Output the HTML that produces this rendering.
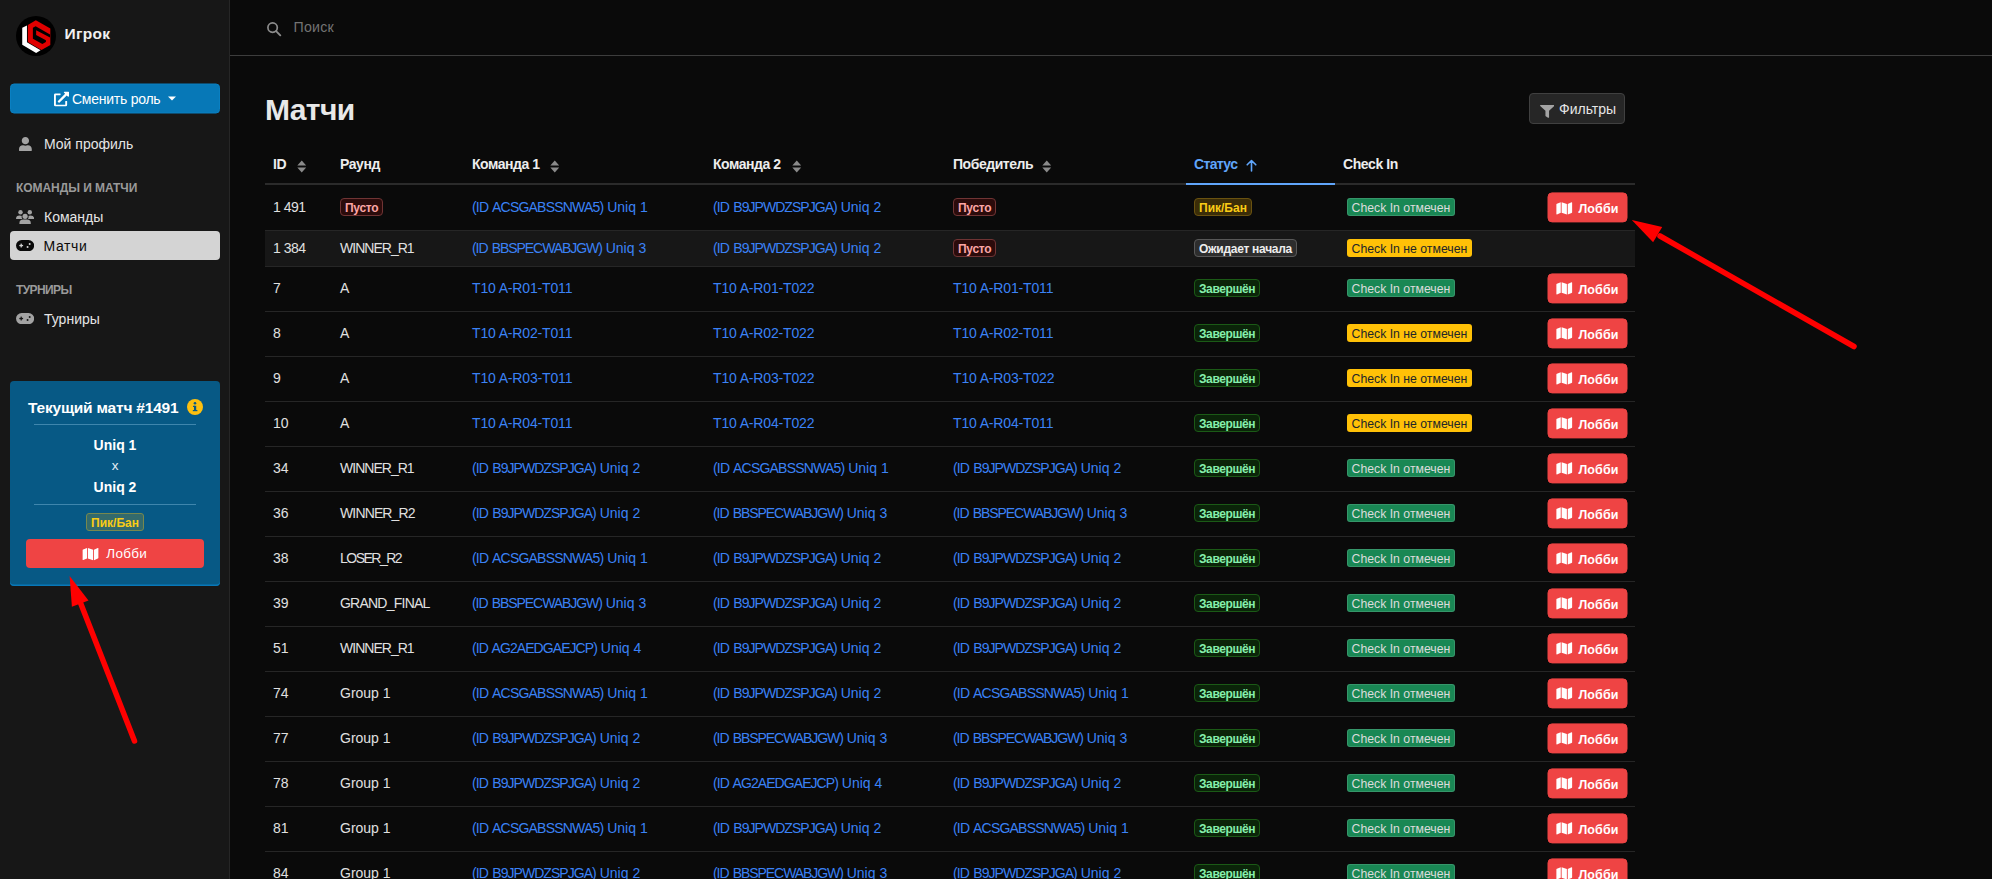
<!DOCTYPE html>
<html lang="ru"><head><meta charset="utf-8"><title>Матчи</title>
<style>
*{box-sizing:border-box;margin:0;padding:0}
html,body{width:1992px;height:879px;overflow:hidden;background:#0a0a0a;
  font-family:"Liberation Sans",sans-serif;color:#e5e5e5;}
body{position:relative}
a{color:inherit;text-decoration:none}
i{font-style:normal}
.abs{position:absolute}
svg{display:block}

/* ---------- sidebar ---------- */
#side{position:absolute;left:0;top:0;width:230px;height:879px;background:#171717;border-right:1px solid #262626}
#logo{position:absolute;left:15.900px;top:15.900px;width:40px;height:40px}
#brand{position:absolute;left:64.500px;top:24px;font-size:15.500px;font-weight:700;color:#f0f0f0;line-height:20px;white-space:nowrap;letter-spacing:0.3px}
#role{position:absolute;left:10px;top:83px;width:210px;height:30px;border-radius:4px;background:#0778b7;border:1px solid #0a80c2;transform:translateY(0.5px);
  color:#fff;font-size:14px;line-height:28px;white-space:nowrap}
.nav{position:absolute;left:10px;width:210px;height:29px;border-radius:4px;color:#e5e5e5;font-size:14px;line-height:29px;white-space:nowrap}
.nav .t{position:absolute;left:34px;top:1px}
.nav svg{position:absolute;left:6px;top:7.5px}
.nav.act{background:#d4d4d4;color:#0a0a0a}
.sec{position:absolute;left:16px;font-size:12px;font-weight:700;color:#9a9a9a;line-height:14px;white-space:nowrap;letter-spacing:-0.2px}

#card{position:absolute;left:10px;top:381px;width:210px;height:205px;background:#075985;border-radius:4px;box-shadow:inset 0 -1.5px 0 #0878b8;color:#fff;text-align:center}
#card .ttl{position:absolute;left:0;top:17px;width:100%;font-size:15.5px;font-weight:700;line-height:20px;white-space:nowrap;letter-spacing:-0.2px}
#card .hr{position:absolute;left:24px;width:162px;height:1px;background:#3f86ad}
#card .tm{position:absolute;left:0;width:100%;font-size:14px;font-weight:700;line-height:18px}
#card .x{position:absolute;left:0;width:100%;font-size:13.5px;line-height:16px;color:#e5eef5}
#cbadge{position:absolute;left:76px;top:132px;width:58px;height:18px;border-radius:3px;background:#336a6c;border:1px solid #76884e;
  font-size:12px;font-weight:700;color:#facc15;line-height:18px;white-space:nowrap}
#cbtn{position:absolute;left:15.7px;top:157.7px;width:178.6px;height:29.7px;border-radius:4px;background:#ef4444;color:#fff;font-size:13.5px;line-height:30px;white-space:nowrap;letter-spacing:0.3px}

/* ---------- topbar ---------- */
#top{position:absolute;left:230px;top:0;width:1762px;height:56px;border-bottom:1px solid #3d3d3d}
#q{position:absolute;left:293.500px;top:18px;font-size:14.200px;color:#737373;line-height:18px;letter-spacing:0.25px}

/* ---------- main ---------- */
h1{position:absolute;left:265px;top:92px;font-size:30px;font-weight:700;color:#e8e8e8;line-height:36px;letter-spacing:-0.6px}
#filt{position:absolute;left:1529px;top:93px;width:96px;height:31px;border-radius:4px;background:#262626;border:1px solid #404040;color:#e5e5e5;font-size:14px;line-height:30px;white-space:nowrap}

table{position:absolute;left:265px;top:146px;width:1370px;border-collapse:collapse;table-layout:fixed;font-size:14px}
th{height:38px;text-align:left;padding:0 8px 2px 8px;font-weight:700;color:#ededed;border-bottom:2px solid #2b2b2b;white-space:nowrap;font-size:14px;letter-spacing:-0.45px;vertical-align:middle}
th.s{color:#60a5fa;border-bottom:2px solid #60a5fa}
td{padding:0 8px;white-space:nowrap;vertical-align:middle;color:#e0e0e0}
tr.r td{height:45px;border-bottom:1px solid #262626;padding-bottom:2px}
tr.r1 td{height:46px;padding-bottom:0}
tr.r2 td{height:36px;background:#171717;padding-bottom:0}
td.l{color:#3b82f6}
.b{display:inline-block;height:18px;line-height:16px;border-radius:4px;border:1px solid;font-size:12px;font-weight:700;padding:1px 4px 0 4px;vertical-align:middle;letter-spacing:-0.2px}
.b.red{background:#2b0b0b;border-color:#703434;color:#fca5a5}
.b.yel{background:#3b2d08;border-color:#6a5210;color:#facc15}
.b.gry{background:#2d2d2d;border-color:#585858;color:#ededed}
.b.grn{background:#0b2409;border-color:#1b5a16;color:#86efac}
.c{display:inline-block;height:18px;line-height:18px;border-radius:3px;font-size:12.25px;font-weight:400;padding:1px 4.6px 0 4.6px;vertical-align:middle;margin-left:4px}
.c.ok{background:#198754;color:#dcdcdc;box-shadow:inset 0 0 0 1px rgba(255,255,255,0.13)}
.c.no{background:#ffc107;color:#212529}
.lb{display:inline-block;width:80px;height:30px;border-radius:4.500px;background:#ef4444;border:1px solid #ef4444;transform:translate(-0.5px,0.4px);letter-spacing:0.1px;color:#fff;font-size:12.5px;font-weight:700;line-height:28px;vertical-align:middle;position:relative;text-align:left}
.lb svg{position:absolute;left:7px;top:7.500px}
.lb span{position:absolute;left:30px;top:2px}
td.a{text-align:right;padding-right:7px}
.si{display:inline-block;vertical-align:middle;margin-left:9.5px;position:relative;top:2px}
</style></head>
<body>
<div id="top"></div>
<div class="abs" style="left:266px;top:21px"><svg width="16" height="16" viewBox="0 0 16 16"><circle cx="6.600" cy="6.600" r="4.700" fill="none" stroke="#8c8c8c" stroke-width="1.700"/><line x1="10.100" y1="10.100" x2="14.300" y2="14.300" stroke="#8c8c8c" stroke-width="1.900" stroke-linecap="round"/></svg></div>
<div id="q">Поиск</div>

<h1>Матчи</h1>
<div id="filt"><span class="abs" style="left:9.700px;top:10.800px"><svg width="14.500" height="12.800" viewBox="0 0 512 512" preserveAspectRatio="none"><path fill="#a3a3a3" d="M487.976 0H24.028C2.710 0-8.047 25.866 7.058 40.971L192 225.941V432c0 7.831 3.821 15.170 10.237 19.662l80 55.980C298.020 518.690 320 507.493 320 487.980V225.941l184.947-184.970C520.021 25.896 509.338 0 487.976 0z"/></svg></span><span class="abs" style="left:29px;top:0">Фильтры</span></div>

<table>
<colgroup><col style="width:67px"><col style="width:132px"><col style="width:241px"><col style="width:240px"><col style="width:241px"><col style="width:149px"><col style="width:195px"><col style="width:105px"></colgroup>
<thead><tr><th>ID<svg class="si" style="margin-left:11px" width="9.500" height="13" viewBox="0 0 9 13" preserveAspectRatio="none"><path fill="#8a8a8a" d="M4.5 0.5 L8.7 5.5 L0.3 5.5 Z M0.3 7.5 L8.7 7.5 L4.5 12.5 Z"/></svg></th><th>Раунд</th><th>Команда 1<svg class="si" style="margin-left:10px" width="9.500" height="13" viewBox="0 0 9 13" preserveAspectRatio="none"><path fill="#8a8a8a" d="M4.5 0.5 L8.7 5.5 L0.3 5.5 Z M0.3 7.5 L8.7 7.5 L4.5 12.5 Z"/></svg></th><th>Команда 2<svg class="si" style="margin-left:11.5px" width="9.500" height="13" viewBox="0 0 9 13" preserveAspectRatio="none"><path fill="#8a8a8a" d="M4.5 0.5 L8.7 5.5 L0.3 5.5 Z M0.3 7.5 L8.7 7.5 L4.5 12.5 Z"/></svg></th><th>Победитель<svg class="si" style="margin-left:9.3px" width="9.500" height="13" viewBox="0 0 9 13" preserveAspectRatio="none"><path fill="#8a8a8a" d="M4.5 0.5 L8.7 5.5 L0.3 5.5 Z M0.3 7.5 L8.7 7.5 L4.5 12.5 Z"/></svg></th><th class="s" style="letter-spacing:-0.65px">Статус<svg class="si" width="11" height="13" viewBox="0 0 11 13" style="margin-left:9px;top:1px"><path fill="none" stroke="#60a5fa" stroke-width="1.6" stroke-linecap="round" stroke-linejoin="round" d="M5.5 12 V1.5 M1.2 5.8 L5.5 1.5 L9.8 5.8"/></svg></th><th>Check In</th><th></th></tr></thead>
<tbody>
<tr class="r r1"><td><i style="letter-spacing:-0.5px">1 491</i></td><td><span class="b red" style="letter-spacing:-0.3px">Пусто</span></td><td class="l"><i style="letter-spacing:-0.80px;word-spacing:1.5px">(ID ACSGABSSNWA5)</i> Uniq 1</td><td class="l"><i style="letter-spacing:-0.95px;word-spacing:1.5px">(ID B9JPWDZSPJGA)</i> Uniq 2</td><td><span class="b red" style="letter-spacing:-0.3px">Пусто</span></td><td><span class="b yel" style="letter-spacing:0">Пик/Бан</span></td><td><span class="c ok">Check In отмечен</span></td><td class="a"><span class="lb"><svg width="17.5" height="14" viewBox="0 0 576 512"><path fill="#fff" d="M0 117.66v346.32c0 11.32 11.43 19.06 21.94 14.86L160 416V32L20.12 87.95A32.006 32.006 0 0 0 0 117.66zM192 416l192 64V96L192 32v384zM554.06 33.16L416 96v384l139.88-55.95A31.996 31.996 0 0 0 576 394.34V48.02c0-11.32-11.43-19.06-21.94-14.86z"/></svg><span>Лобби</span></span></td></tr>
<tr class="r r2"><td><i style="letter-spacing:-0.5px">1 384</i></td><td><i style="letter-spacing:-0.98px">WINNER_R1</i></td><td class="l"><i style="letter-spacing:-1.07px;word-spacing:1.5px">(ID BBSPECWABJGW)</i> Uniq 3</td><td class="l"><i style="letter-spacing:-0.95px;word-spacing:1.5px">(ID B9JPWDZSPJGA)</i> Uniq 2</td><td><span class="b red" style="letter-spacing:-0.3px">Пусто</span></td><td><span class="b gry" style="letter-spacing:-0.27px">Ожидает начала</span></td><td><span class="c no">Check In не отмечен</span></td><td class="a"></td></tr>
<tr class="r"><td>7</td><td>A</td><td class="l"><i style="letter-spacing:-0.15px">T10 A-R01-T011</i></td><td class="l"><i style="letter-spacing:-0.15px">T10 A-R01-T022</i></td><td class="l"><i style="letter-spacing:-0.15px">T10 A-R01-T011</i></td><td><span class="b grn" style="letter-spacing:-0.4px">Завершён</span></td><td><span class="c ok">Check In отмечен</span></td><td class="a"><span class="lb"><svg width="17.5" height="14" viewBox="0 0 576 512"><path fill="#fff" d="M0 117.66v346.32c0 11.32 11.43 19.06 21.94 14.86L160 416V32L20.12 87.95A32.006 32.006 0 0 0 0 117.66zM192 416l192 64V96L192 32v384zM554.06 33.16L416 96v384l139.88-55.95A31.996 31.996 0 0 0 576 394.34V48.02c0-11.32-11.43-19.06-21.94-14.86z"/></svg><span>Лобби</span></span></td></tr>
<tr class="r"><td>8</td><td>A</td><td class="l"><i style="letter-spacing:-0.15px">T10 A-R02-T011</i></td><td class="l"><i style="letter-spacing:-0.15px">T10 A-R02-T022</i></td><td class="l"><i style="letter-spacing:-0.15px">T10 A-R02-T011</i></td><td><span class="b grn" style="letter-spacing:-0.4px">Завершён</span></td><td><span class="c no">Check In не отмечен</span></td><td class="a"><span class="lb"><svg width="17.5" height="14" viewBox="0 0 576 512"><path fill="#fff" d="M0 117.66v346.32c0 11.32 11.43 19.06 21.94 14.86L160 416V32L20.12 87.95A32.006 32.006 0 0 0 0 117.66zM192 416l192 64V96L192 32v384zM554.06 33.16L416 96v384l139.88-55.95A31.996 31.996 0 0 0 576 394.34V48.02c0-11.32-11.43-19.06-21.94-14.86z"/></svg><span>Лобби</span></span></td></tr>
<tr class="r"><td>9</td><td>A</td><td class="l"><i style="letter-spacing:-0.15px">T10 A-R03-T011</i></td><td class="l"><i style="letter-spacing:-0.15px">T10 A-R03-T022</i></td><td class="l"><i style="letter-spacing:-0.15px">T10 A-R03-T022</i></td><td><span class="b grn" style="letter-spacing:-0.4px">Завершён</span></td><td><span class="c no">Check In не отмечен</span></td><td class="a"><span class="lb"><svg width="17.5" height="14" viewBox="0 0 576 512"><path fill="#fff" d="M0 117.66v346.32c0 11.32 11.43 19.06 21.94 14.86L160 416V32L20.12 87.95A32.006 32.006 0 0 0 0 117.66zM192 416l192 64V96L192 32v384zM554.06 33.16L416 96v384l139.88-55.95A31.996 31.996 0 0 0 576 394.34V48.02c0-11.32-11.43-19.06-21.94-14.86z"/></svg><span>Лобби</span></span></td></tr>
<tr class="r"><td>10</td><td>A</td><td class="l"><i style="letter-spacing:-0.15px">T10 A-R04-T011</i></td><td class="l"><i style="letter-spacing:-0.15px">T10 A-R04-T022</i></td><td class="l"><i style="letter-spacing:-0.15px">T10 A-R04-T011</i></td><td><span class="b grn" style="letter-spacing:-0.4px">Завершён</span></td><td><span class="c no">Check In не отмечен</span></td><td class="a"><span class="lb"><svg width="17.5" height="14" viewBox="0 0 576 512"><path fill="#fff" d="M0 117.66v346.32c0 11.32 11.43 19.06 21.94 14.86L160 416V32L20.12 87.95A32.006 32.006 0 0 0 0 117.66zM192 416l192 64V96L192 32v384zM554.06 33.16L416 96v384l139.88-55.95A31.996 31.996 0 0 0 576 394.34V48.02c0-11.32-11.43-19.06-21.94-14.86z"/></svg><span>Лобби</span></span></td></tr>
<tr class="r"><td>34</td><td><i style="letter-spacing:-0.98px">WINNER_R1</i></td><td class="l"><i style="letter-spacing:-0.95px;word-spacing:1.5px">(ID B9JPWDZSPJGA)</i> Uniq 2</td><td class="l"><i style="letter-spacing:-0.80px;word-spacing:1.5px">(ID ACSGABSSNWA5)</i> Uniq 1</td><td class="l"><i style="letter-spacing:-0.95px;word-spacing:1.5px">(ID B9JPWDZSPJGA)</i> Uniq 2</td><td><span class="b grn" style="letter-spacing:-0.4px">Завершён</span></td><td><span class="c ok">Check In отмечен</span></td><td class="a"><span class="lb"><svg width="17.5" height="14" viewBox="0 0 576 512"><path fill="#fff" d="M0 117.66v346.32c0 11.32 11.43 19.06 21.94 14.86L160 416V32L20.12 87.95A32.006 32.006 0 0 0 0 117.66zM192 416l192 64V96L192 32v384zM554.06 33.16L416 96v384l139.88-55.95A31.996 31.996 0 0 0 576 394.34V48.02c0-11.32-11.43-19.06-21.94-14.86z"/></svg><span>Лобби</span></span></td></tr>
<tr class="r"><td>36</td><td><i style="letter-spacing:-0.86px">WINNER_R2</i></td><td class="l"><i style="letter-spacing:-0.95px;word-spacing:1.5px">(ID B9JPWDZSPJGA)</i> Uniq 2</td><td class="l"><i style="letter-spacing:-1.07px;word-spacing:1.5px">(ID BBSPECWABJGW)</i> Uniq 3</td><td class="l"><i style="letter-spacing:-1.07px;word-spacing:1.5px">(ID BBSPECWABJGW)</i> Uniq 3</td><td><span class="b grn" style="letter-spacing:-0.4px">Завершён</span></td><td><span class="c ok">Check In отмечен</span></td><td class="a"><span class="lb"><svg width="17.5" height="14" viewBox="0 0 576 512"><path fill="#fff" d="M0 117.66v346.32c0 11.32 11.43 19.06 21.94 14.86L160 416V32L20.12 87.95A32.006 32.006 0 0 0 0 117.66zM192 416l192 64V96L192 32v384zM554.06 33.16L416 96v384l139.88-55.95A31.996 31.996 0 0 0 576 394.34V48.02c0-11.32-11.43-19.06-21.94-14.86z"/></svg><span>Лобби</span></span></td></tr>
<tr class="r"><td>38</td><td><i style="letter-spacing:-1.5px">LOSER_R2</i></td><td class="l"><i style="letter-spacing:-0.80px;word-spacing:1.5px">(ID ACSGABSSNWA5)</i> Uniq 1</td><td class="l"><i style="letter-spacing:-0.95px;word-spacing:1.5px">(ID B9JPWDZSPJGA)</i> Uniq 2</td><td class="l"><i style="letter-spacing:-0.95px;word-spacing:1.5px">(ID B9JPWDZSPJGA)</i> Uniq 2</td><td><span class="b grn" style="letter-spacing:-0.4px">Завершён</span></td><td><span class="c ok">Check In отмечен</span></td><td class="a"><span class="lb"><svg width="17.5" height="14" viewBox="0 0 576 512"><path fill="#fff" d="M0 117.66v346.32c0 11.32 11.43 19.06 21.94 14.86L160 416V32L20.12 87.95A32.006 32.006 0 0 0 0 117.66zM192 416l192 64V96L192 32v384zM554.06 33.16L416 96v384l139.88-55.95A31.996 31.996 0 0 0 576 394.34V48.02c0-11.32-11.43-19.06-21.94-14.86z"/></svg><span>Лобби</span></span></td></tr>
<tr class="r"><td>39</td><td><i style="letter-spacing:-0.77px">GRAND_FINAL</i></td><td class="l"><i style="letter-spacing:-1.07px;word-spacing:1.5px">(ID BBSPECWABJGW)</i> Uniq 3</td><td class="l"><i style="letter-spacing:-0.95px;word-spacing:1.5px">(ID B9JPWDZSPJGA)</i> Uniq 2</td><td class="l"><i style="letter-spacing:-0.95px;word-spacing:1.5px">(ID B9JPWDZSPJGA)</i> Uniq 2</td><td><span class="b grn" style="letter-spacing:-0.4px">Завершён</span></td><td><span class="c ok">Check In отмечен</span></td><td class="a"><span class="lb"><svg width="17.5" height="14" viewBox="0 0 576 512"><path fill="#fff" d="M0 117.66v346.32c0 11.32 11.43 19.06 21.94 14.86L160 416V32L20.12 87.95A32.006 32.006 0 0 0 0 117.66zM192 416l192 64V96L192 32v384zM554.06 33.16L416 96v384l139.88-55.95A31.996 31.996 0 0 0 576 394.34V48.02c0-11.32-11.43-19.06-21.94-14.86z"/></svg><span>Лобби</span></span></td></tr>
<tr class="r"><td>51</td><td><i style="letter-spacing:-0.98px">WINNER_R1</i></td><td class="l"><i style="letter-spacing:-0.93px;word-spacing:1.5px">(ID AG2AEDGAEJCP)</i> Uniq 4</td><td class="l"><i style="letter-spacing:-0.95px;word-spacing:1.5px">(ID B9JPWDZSPJGA)</i> Uniq 2</td><td class="l"><i style="letter-spacing:-0.95px;word-spacing:1.5px">(ID B9JPWDZSPJGA)</i> Uniq 2</td><td><span class="b grn" style="letter-spacing:-0.4px">Завершён</span></td><td><span class="c ok">Check In отмечен</span></td><td class="a"><span class="lb"><svg width="17.5" height="14" viewBox="0 0 576 512"><path fill="#fff" d="M0 117.66v346.32c0 11.32 11.43 19.06 21.94 14.86L160 416V32L20.12 87.95A32.006 32.006 0 0 0 0 117.66zM192 416l192 64V96L192 32v384zM554.06 33.16L416 96v384l139.88-55.95A31.996 31.996 0 0 0 576 394.34V48.02c0-11.32-11.43-19.06-21.94-14.86z"/></svg><span>Лобби</span></span></td></tr>
<tr class="r"><td>74</td><td>Group 1</td><td class="l"><i style="letter-spacing:-0.80px;word-spacing:1.5px">(ID ACSGABSSNWA5)</i> Uniq 1</td><td class="l"><i style="letter-spacing:-0.95px;word-spacing:1.5px">(ID B9JPWDZSPJGA)</i> Uniq 2</td><td class="l"><i style="letter-spacing:-0.80px;word-spacing:1.5px">(ID ACSGABSSNWA5)</i> Uniq 1</td><td><span class="b grn" style="letter-spacing:-0.4px">Завершён</span></td><td><span class="c ok">Check In отмечен</span></td><td class="a"><span class="lb"><svg width="17.5" height="14" viewBox="0 0 576 512"><path fill="#fff" d="M0 117.66v346.32c0 11.32 11.43 19.06 21.94 14.86L160 416V32L20.12 87.95A32.006 32.006 0 0 0 0 117.66zM192 416l192 64V96L192 32v384zM554.06 33.16L416 96v384l139.88-55.95A31.996 31.996 0 0 0 576 394.34V48.02c0-11.32-11.43-19.06-21.94-14.86z"/></svg><span>Лобби</span></span></td></tr>
<tr class="r"><td>77</td><td>Group 1</td><td class="l"><i style="letter-spacing:-0.95px;word-spacing:1.5px">(ID B9JPWDZSPJGA)</i> Uniq 2</td><td class="l"><i style="letter-spacing:-1.07px;word-spacing:1.5px">(ID BBSPECWABJGW)</i> Uniq 3</td><td class="l"><i style="letter-spacing:-1.07px;word-spacing:1.5px">(ID BBSPECWABJGW)</i> Uniq 3</td><td><span class="b grn" style="letter-spacing:-0.4px">Завершён</span></td><td><span class="c ok">Check In отмечен</span></td><td class="a"><span class="lb"><svg width="17.5" height="14" viewBox="0 0 576 512"><path fill="#fff" d="M0 117.66v346.32c0 11.32 11.43 19.06 21.94 14.86L160 416V32L20.12 87.95A32.006 32.006 0 0 0 0 117.66zM192 416l192 64V96L192 32v384zM554.06 33.16L416 96v384l139.88-55.95A31.996 31.996 0 0 0 576 394.34V48.02c0-11.32-11.43-19.06-21.94-14.86z"/></svg><span>Лобби</span></span></td></tr>
<tr class="r"><td>78</td><td>Group 1</td><td class="l"><i style="letter-spacing:-0.95px;word-spacing:1.5px">(ID B9JPWDZSPJGA)</i> Uniq 2</td><td class="l"><i style="letter-spacing:-0.93px;word-spacing:1.5px">(ID AG2AEDGAEJCP)</i> Uniq 4</td><td class="l"><i style="letter-spacing:-0.95px;word-spacing:1.5px">(ID B9JPWDZSPJGA)</i> Uniq 2</td><td><span class="b grn" style="letter-spacing:-0.4px">Завершён</span></td><td><span class="c ok">Check In отмечен</span></td><td class="a"><span class="lb"><svg width="17.5" height="14" viewBox="0 0 576 512"><path fill="#fff" d="M0 117.66v346.32c0 11.32 11.43 19.06 21.94 14.86L160 416V32L20.12 87.95A32.006 32.006 0 0 0 0 117.66zM192 416l192 64V96L192 32v384zM554.06 33.16L416 96v384l139.88-55.95A31.996 31.996 0 0 0 576 394.34V48.02c0-11.32-11.43-19.06-21.94-14.86z"/></svg><span>Лобби</span></span></td></tr>
<tr class="r"><td>81</td><td>Group 1</td><td class="l"><i style="letter-spacing:-0.80px;word-spacing:1.5px">(ID ACSGABSSNWA5)</i> Uniq 1</td><td class="l"><i style="letter-spacing:-0.95px;word-spacing:1.5px">(ID B9JPWDZSPJGA)</i> Uniq 2</td><td class="l"><i style="letter-spacing:-0.80px;word-spacing:1.5px">(ID ACSGABSSNWA5)</i> Uniq 1</td><td><span class="b grn" style="letter-spacing:-0.4px">Завершён</span></td><td><span class="c ok">Check In отмечен</span></td><td class="a"><span class="lb"><svg width="17.5" height="14" viewBox="0 0 576 512"><path fill="#fff" d="M0 117.66v346.32c0 11.32 11.43 19.06 21.94 14.86L160 416V32L20.12 87.95A32.006 32.006 0 0 0 0 117.66zM192 416l192 64V96L192 32v384zM554.06 33.16L416 96v384l139.88-55.95A31.996 31.996 0 0 0 576 394.34V48.02c0-11.32-11.43-19.06-21.94-14.86z"/></svg><span>Лобби</span></span></td></tr>
<tr class="r"><td>84</td><td>Group 1</td><td class="l"><i style="letter-spacing:-0.95px;word-spacing:1.5px">(ID B9JPWDZSPJGA)</i> Uniq 2</td><td class="l"><i style="letter-spacing:-1.07px;word-spacing:1.5px">(ID BBSPECWABJGW)</i> Uniq 3</td><td class="l"><i style="letter-spacing:-0.95px;word-spacing:1.5px">(ID B9JPWDZSPJGA)</i> Uniq 2</td><td><span class="b grn" style="letter-spacing:-0.4px">Завершён</span></td><td><span class="c ok">Check In отмечен</span></td><td class="a"><span class="lb"><svg width="17.5" height="14" viewBox="0 0 576 512"><path fill="#fff" d="M0 117.66v346.32c0 11.32 11.43 19.06 21.94 14.86L160 416V32L20.12 87.95A32.006 32.006 0 0 0 0 117.66zM192 416l192 64V96L192 32v384zM554.06 33.16L416 96v384l139.88-55.95A31.996 31.996 0 0 0 576 394.34V48.02c0-11.32-11.43-19.06-21.94-14.86z"/></svg><span>Лобби</span></span></td></tr>
</tbody>
</table>

<div id="side">
<svg id="logo" viewBox="0 0 40 40"><circle cx="20" cy="20" r="20" fill="#000"/>
<polygon points="6.230,11.850 10.960,9.600 10.960,26.350 24.570,34.340 20.140,37 6.230,28.700" fill="#fff"/>
<polygon points="19.840,4.160 34.340,12.440 34.340,29.010 25.460,34.040 11.850,26.050 11.850,8.890" fill="#e00000"/>
<polygon points="16.880,11.850 19.660,10.190 34.040,18.480 34.040,21.440 20.140,14.220 20.140,18.950 29.900,24.280 29.900,26.050 26.350,28.120 16.880,22.800" fill="#000"/>
</svg>
<div id="brand">Игрок</div>
<div id="role"><span class="abs" style="left:42.500px;top:7px"><svg width="15" height="15" viewBox="0 0 512 512"><path fill="#fff" d="M432 320h-32a16 16 0 0 0-16 16v112H64V128h144a16 16 0 0 0 16-16V80a16 16 0 0 0-16-16H48a48 48 0 0 0-48 48v352a48 48 0 0 0 48 48h352a48 48 0 0 0 48-48V336a16 16 0 0 0-16-16zM488 0H360c-21.370 0-32.050 25.910-17 41l35.730 35.730L135 320.370a24 24 0 0 0 0 34L157.670 377a24 24 0 0 0 34 0l243.610-243.680L471 169c15 15 41 4.500 41-17V24a24 24 0 0 0-24-24z"/></svg></span><span class="abs" style="left:61px;top:0;letter-spacing:-0.25px">Сменить роль</span><span class="abs" style="left:157.200px;top:11.500px;width:0;height:0;border-left:4px solid transparent;border-right:4px solid transparent;border-top:4.500px solid #fff"></span></div>

<div class="nav" style="top:129px"><svg width="12.800" height="14.600" viewBox="0 0 448 512" style="left:8.800px;top:7.500px"><path fill="#a3a3a3" d="M224 256c70.7 0 128-57.3 128-128S294.7 0 224 0 96 57.3 96 128s57.3 128 128 128zm89.6 32h-16.7c-22.2 10.2-46.9 16-72.9 16s-50.6-5.800-72.9-16h-16.7C60.200 288 0 348.200 0 422.400V464c0 26.500 21.500 48 48 48h352c26.500 0 48-21.500 48-48v-41.600c0-74.200-60.200-134.400-134.400-134.400z"/></svg><span class="t">Мой профиль</span></div>
<div class="sec" style="top:181px;letter-spacing:-0.05px">КОМАНДЫ И МАТЧИ</div>
<div class="nav" style="top:202px"><svg width="18.200" height="14.400" viewBox="0 0 18.200 14.400" style="left:5.900px;top:7.600px"><g fill="#a3a3a3"><circle cx="4.500" cy="2.300" r="2.200"/><circle cx="13.800" cy="2.300" r="2.200"/><path d="M0 8.900 Q0 5.400 3.600 5.400 Q5.200 5.400 5.700 5.900 Q5.300 8 6.400 8.900 Z"/><path d="M18.200 8.900 Q18.200 5.400 14.600 5.400 Q13 5.400 12.500 5.900 Q12.900 8 11.800 8.900 Z"/><circle cx="9.100" cy="6.300" r="2.600"/><path d="M3.400 14.400 L3.400 13.200 Q3.400 9.600 7.200 9.600 L11 9.600 Q14.800 9.600 14.800 13.200 L14.800 14.400 Z"/></g></svg><span class="t">Команды</span></div>
<div class="nav act" style="top:231px"><svg width="18.200" height="11.200" viewBox="0 0 18.200 11.200" style="left:5.900px;top:8.800px"><rect x="0" y="0" width="18.200" height="11.200" rx="5.600" fill="#0a0a0a"/><g fill="#d4d4d4"><rect x="3.300" y="4.900" width="3.800" height="1.300"/><rect x="4.550" y="3.650" width="1.300" height="3.800"/><circle cx="13.700" cy="4.100" r="1"/><circle cx="11.600" cy="7" r="1"/></g></svg><span class="t" style="letter-spacing:0.6px;left:33.500px">Матчи</span></div>
<div class="sec" style="top:283px;letter-spacing:-0.6px">ТУРНИРЫ</div>
<div class="nav" style="top:304px"><svg width="18.200" height="11.200" viewBox="0 0 18.200 11.200" style="left:5.900px;top:8.800px"><rect x="0" y="0" width="18.200" height="11.200" rx="5.600" fill="#a3a3a3"/><g fill="#171717"><rect x="3.300" y="4.900" width="3.800" height="1.300"/><rect x="4.550" y="3.650" width="1.300" height="3.800"/><circle cx="13.700" cy="4.100" r="1"/><circle cx="11.600" cy="7" r="1"/></g></svg><span class="t">Турниры</span></div>

<div id="card">
 <div class="ttl"><span style="position:relative;left:-11.800px">Текущий матч #1491</span></div>
 <span class="abs" style="left:176.600px;top:18px"><svg width="16" height="16" viewBox="0 0 16 16"><circle cx="8" cy="8" r="8" fill="#fdc010"/><rect x="7" y="6.800" width="2.200" height="5" fill="#075985"/><rect x="6" y="6.800" width="2" height="1.200" fill="#075985"/><rect x="5.800" y="11" width="4.600" height="1.200" fill="#075985"/><circle cx="8" cy="4.300" r="1.300" fill="#075985"/></svg></span>
 <div class="hr" style="top:43px"></div>
 <div class="tm" style="top:55px">Uniq 1</div>
 <div class="x" style="top:77px">x</div>
 <div class="tm" style="top:97px">Uniq 2</div>
 <div class="hr" style="top:123px"></div>
 <div id="cbadge">Пик/Бан</div>
 <div id="cbtn"><span class="abs" style="left:56px;top:8px"><svg width="17" height="14" viewBox="0 0 576 512"><path fill="#fff" d="M0 117.66v346.32c0 11.32 11.43 19.06 21.94 14.86L160 416V32L20.12 87.95A32.006 32.006 0 0 0 0 117.66zM192 416l192 64V96L192 32v384zM554.06 33.16L416 96v384l139.88-55.95A31.996 31.996 0 0 0 576 394.34V48.02c0-11.32-11.43-19.06-21.94-14.86z"/></svg></span><span class="abs" style="left:80.600px;top:0.800px">Лобби</span></div>
</div>
</div>

<svg class="abs" style="left:0;top:0;pointer-events:none" width="1992" height="879" viewBox="0 0 1992 879">
 <g stroke="#ff0000" stroke-width="6" stroke-linecap="round" fill="#ff0000">
  <line x1="134.500" y1="741" x2="79" y2="599" stroke-width="5.500"/>
  <polygon points="69.600,575.900 71.900,606.700 88.500,600.500" stroke="none"/>
  <line x1="1854" y1="346.500" x2="1660" y2="236" stroke-width="5.500"/>
  <polygon points="1631.800,220 1662.200,226.900 1653.100,242.200" stroke="none"/>
 </g>
</svg>
</body></html>
